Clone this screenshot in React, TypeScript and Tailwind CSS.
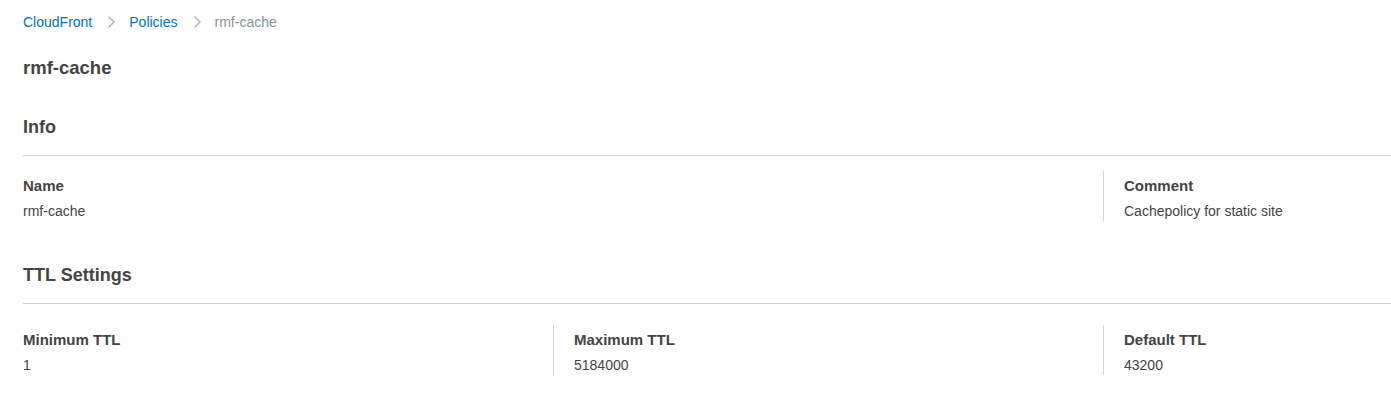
const ChevronRight = () => (
  <svg width="12" height="14" viewBox="0 0 12 14" fill="none" className="shrink-0">
    <path d="M3.5 1.5 L9 7 L3.5 12.5" stroke="#aab7b8" strokeWidth="1.4" />
  </svg>
);

const Field = ({ label, value }: { label: string; value: string }) => (
  <div className="pt-[5px]">
    <div className="text-[15px] leading-[20px] font-bold text-[#444]">{label}</div>
    <div className="mt-[5px] text-[14px] leading-[20px] text-[#444]">{value}</div>
  </div>
);

export default function App() {
  return (
    <div
      className="min-h-[409px] bg-white pl-[23px] pt-3"
      style={{ fontFamily: '"Liberation Sans", Arial, Helvetica, sans-serif' }}
    >
      {/* Breadcrumb */}
      <nav className="flex items-center text-[14px] leading-[20px]">
        <a className="text-[#0073bb]">CloudFront</a>
        <span className="ml-[13px] mr-[12px] flex items-center"><ChevronRight /></span>
        <a className="text-[#0073bb]">Policies</a>
        <span className="ml-[13px] mr-[12px] flex items-center"><ChevronRight /></span>
        <span className="text-[#879596]">rmf-cache</span>
      </nav>

      <h1 className="mt-[24px] text-[18.5px] leading-[24px] font-bold text-[#444]">rmf-cache</h1>

      {/* Info */}
      <section className="mt-[35px]">
        <h2 className="text-[18px] leading-[24px] font-bold text-[#444] pb-4 border-b border-[#cfcfcf]">Info</h2>
        <div className="flex mt-[15px]">
          <div className="w-[1080px]">
            <Field label="Name" value="rmf-cache" />
          </div>
          <div className="flex-1 border-l border-[#d5d5d5] pl-[20px]">
            <Field label="Comment" value="Cachepolicy for static site" />
          </div>
        </div>
      </section>

      {/* TTL Settings */}
      <section className="mt-[42px]">
        <h2 className="text-[18px] leading-[24px] font-bold text-[#444] pb-4 border-b border-[#cfcfcf]">TTL Settings</h2>
        <div className="flex mt-[21px]">
          <div className="w-[530px]">
            <Field label="Minimum TTL" value="1" />
          </div>
          <div className="w-[550px] border-l border-[#d5d5d5] pl-[20px]">
            <Field label="Maximum TTL" value="5184000" />
          </div>
          <div className="flex-1 border-l border-[#d5d5d5] pl-[20px]">
            <Field label="Default TTL" value="43200" />
          </div>
        </div>
      </section>
    </div>
  );
}
